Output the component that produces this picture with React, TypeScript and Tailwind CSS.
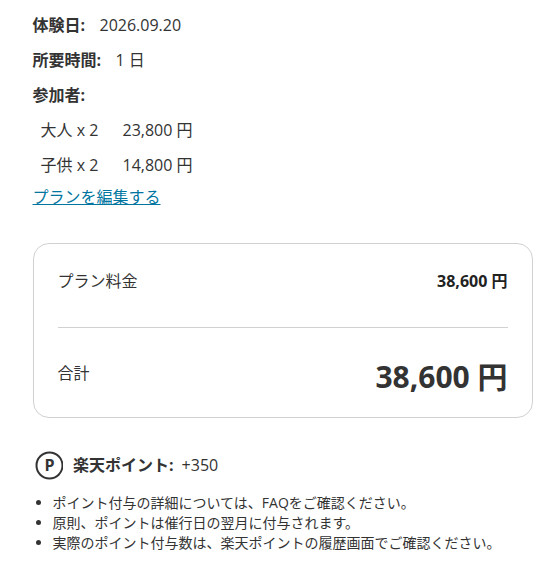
export default function App() {
  return (
    <div className="w-[557px] h-[576px] overflow-hidden bg-white pl-[32.5px] pr-6 pt-[13px] text-[#333333] text-base leading-6 font-['Open_Sans','Noto_Sans_CJK_JP',sans-serif]">
      <div className="flex flex-col gap-[11px]">
        <div className="flex"><span className="font-bold w-[67px]">体験日:</span><span>2026.09.20</span></div>
        <div className="flex"><span className="font-bold w-[83px]">所要時間:</span><span>1 日</span></div>
        <div className="font-bold">参加者:</div>
        <div className="flex pl-2"><span className="w-[82px]">大人 x 2</span><span>23,800 円</span></div>
        <div className="flex pl-2"><span className="w-[82px]">子供 x 2</span><span>14,800 円</span></div>
      </div>
      <a className="block mt-[8px] w-fit text-[#00759f] underline" href="#">プランを編集する</a>
      <div className="mt-[34px] w-[500px] h-[175px] rounded-2xl border border-[#d1d1d1] px-6 flex flex-col">
        <div className="h-[84px] flex justify-between items-start pt-[25px] border-b border-[#d1d1d1]">
          <span>プラン料金</span>
          <span className="font-bold text-[#222222] leading-6">38,600 円</span>
        </div>
        <div className="flex justify-between items-center pt-[22px]">
          <span className="-mt-2">合計</span>
          <span className="font-bold text-[30px] leading-[54px]">38,600 円</span>
        </div>
      </div>
      <div className="mt-[32px] flex items-center">
        <svg width="30" height="30" viewBox="0 0 30 30" className="mr-[10.5px]">
          <circle cx="16.5" cy="15.5" r="13" fill="none" stroke="#333333" strokeWidth="2" />
          <text x="16.5" y="21.2" textAnchor="middle" fontSize="16" fontWeight="700" fill="#333333" fontFamily="'Open Sans',sans-serif">P</text>
        </svg>
        <span className="font-bold mr-2">楽天ポイント:</span>
        <span>+350</span>
      </div>
      <ul className="mt-[13px] list-disc pl-5 text-sm leading-5">
        <li>ポイント付与の詳細については、FAQをご確認ください。</li>
        <li>原則、ポイントは催行日の翌月に付与されます。</li>
        <li>実際のポイント付与数は、楽天ポイントの履歴画面でご確認ください。</li>
      </ul>
    </div>
  );
}
